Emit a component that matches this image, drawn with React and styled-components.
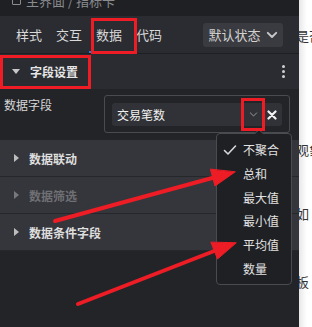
import React from "react";
import styled, { createGlobalStyle } from "styled-components";

const GlobalStyle = createGlobalStyle`
  html, body {
    margin: 0;
    padding: 0;
    background: #ffffff;
  }
  * {
    box-sizing: border-box;
  }
  #root {
    width: 312px;
    height: 327px;
    overflow: hidden;
    font-family: "Noto Sans CJK SC", "Noto Sans", sans-serif;
  }
`;

const tabs = ["样式", "交互", "数据", "代码"];
const rows = [
  { name: "数据联动", disabled: false },
  { name: "数据筛选", disabled: true },
  { name: "数据条件字段", disabled: false },
];
const aggregates = ["不聚合", "总和", "最大值", "最小值", "平均值", "数量"];

const ChevronDown = ({ size = 10, color = "#cfcfcf", stroke = 1.6 }) => (
  <svg width={size} height={size} viewBox="0 0 10 10">
    <path d="M1.5 3.2 L5 6.7 L8.5 3.2" fill="none" stroke={color} strokeWidth={stroke} strokeLinecap="round" strokeLinejoin="round" />
  </svg>
);

const App = () => {
  return (
    <Page>
      <GlobalStyle />
      <MainPanel>
        <TopBar>
          <Crumb>
            <CrumbIcon />
            主界面 / 指标卡
          </Crumb>
        </TopBar>

        <TabBar>
          <TabList>
            {tabs.map((t) => (
              <Tab key={t} active={t === "数据"}>{t}</Tab>
            ))}
          </TabList>
          <StateSelect>
            默认状态
            <ChevronDown size={12} color="#c8c8c8" />
          </StateSelect>
        </TabBar>

        <SectionHeader>
          <Caret open />
          <SectionTitle>字段设置</SectionTitle>
          <Kebab>
            <i /><i /><i />
          </Kebab>
        </SectionHeader>

        <FieldArea>
          <FieldLabel>数据字段</FieldLabel>
          <SelectorBox>
            <SelectInput>
              <SelectValue>交易笔数</SelectValue>
              <SelectArrow>
                <ChevronDown size={9} color="#9a9a9a" stroke={1.1} />
              </SelectArrow>
              <ClearButton>
                <svg width="10" height="10" viewBox="0 0 10 10">
                  <path d="M1.5 1.5 L8.5 8.5 M8.5 1.5 L1.5 8.5" stroke="#f2f2f2" strokeWidth="2.2" strokeLinecap="round" />
                </svg>
              </ClearButton>
            </SelectInput>
          </SelectorBox>
        </FieldArea>

        {rows.map((r) => (
          <CollapseRow key={r.name}>
            <Caret disabled={r.disabled} />
            <RowTitle disabled={r.disabled}>{r.name}</RowTitle>
          </CollapseRow>
        ))}

        <Menu>
          <MenuNotch />
          {aggregates.map((a, i) => (
            <MenuItem key={a}>
              <Check>
                {i === 0 && (
                  <svg width="14" height="12" viewBox="0 0 14 12">
                    <path d="M1.5 6.5 L5 10 L12.5 2" fill="none" stroke="#d8d8d8" strokeWidth="1.6" strokeLinecap="round" strokeLinejoin="round" />
                  </svg>
                )}
              </Check>
              {a}
            </MenuItem>
          ))}
        </Menu>
      </MainPanel>

      <SidePanel>
        <SideText top={29}>是否</SideText>
        <SideText top={100}>观象</SideText>
        <SideText top={50}>如</SideText>
        <SideText top={54}>板</SideText>
      </SidePanel>

      <Annotations width="312" height="327" viewBox="0 0 312 327">
        <g fill="none" stroke="#ee1c25" strokeWidth="3">
          <rect x="92.5" y="19.5" width="43" height="33" />
          <rect x="1.5" y="56.5" width="88" height="31" />
          <rect x="242.5" y="99.5" width="21" height="30" />
        </g>
        <g fill="#ee1c25" stroke="#ee1c25" strokeLinecap="round">
          <line x1="55" y1="221" x2="214" y2="177.5" strokeWidth="4" />
          <polygon points="235,172 215,186 210.5,169.5" strokeWidth="1" strokeLinejoin="round" />
          <line x1="78" y1="304" x2="215.5" y2="250.5" strokeWidth="4" />
          <polygon points="236,243 217.5,259 211,242.5" strokeWidth="1" strokeLinejoin="round" />
        </g>
      </Annotations>
    </Page>
  );
};

const Page = styled.div`
  position: relative;
  display: flex;
  width: 312px;
  height: 327px;
  background: #ffffff;
`;

const MainPanel = styled.div`
  position: relative;
  width: 299px;
  height: 100%;
  display: flex;
  flex-direction: column;
  background: #232428;
`;

const TopBar = styled.div`
  height: 16px;
  background: #1f2024;
  overflow: hidden;
  padding-left: 12px;
`;

const Crumb = styled.div`
  display: flex;
  align-items: center;
  gap: 5px;
  margin-top: -8px;
  height: 16px;
  font-size: 13px;
  color: #8a8b8f;
`;

const CrumbIcon = styled.span`
  width: 9px;
  height: 9px;
  border: 1px solid #8a8b8f;
  border-radius: 1px;
`;

const TabBar = styled.div`
  height: 38px;
  display: flex;
  align-items: center;
  justify-content: space-between;
  padding: 0 16px 0 9px;
  background: #2b2c31;
  border-bottom: 1px solid #1e1f22;
`;

const TabList = styled.div`
  display: flex;
  height: 100%;
`;

const Tab = styled.div`
  width: 40px;
  height: 100%;
  display: flex;
  align-items: center;
  justify-content: center;
  font-size: 13px;
  color: #d9d9d9;
  border-bottom: 2px solid ${(p) => (p.active ? "#1a7ff0" : "transparent")};
  padding-top: 2px;
`;

const StateSelect = styled.div`
  width: 80px;
  height: 24px;
  display: flex;
  align-items: center;
  justify-content: center;
  gap: 5px;
  background: #3a3b40;
  border-radius: 3px;
  font-size: 13px;
  color: #d2d2d2;
`;

const SectionHeader = styled.div`
  height: 35px;
  display: flex;
  align-items: center;
  padding: 0 14px 0 12px;
  background: #2b2c31;
`;

const Caret = styled.span`
  width: 0;
  height: 0;
  margin-right: 10px;
  margin-left: ${(p) => (p.open ? "0" : "2px")};
  ${(p) =>
    p.open
      ? `border-left: 4px solid transparent; border-right: 4px solid transparent; border-top: 5px solid #c8c8c8;`
      : `border-top: 4px solid transparent; border-bottom: 4px solid transparent; border-left: 5px solid ${p.disabled ? "#77787c" : "#bdbdbd"};`}
`;

const SectionTitle = styled.div`
  flex: 1;
  font-size: 12px;
  font-weight: 700;
  color: #e6e6e6;
`;

const Kebab = styled.div`
  display: flex;
  flex-direction: column;
  gap: 2px;
  & > i {
    width: 3px;
    height: 3px;
    border-radius: 50%;
    background: #d0d0d0;
  }
`;

const FieldArea = styled.div`
  height: 51px;
  display: flex;
  align-items: flex-start;
  padding: 6px 9px 0 4px;
  background: #232428;
`;

const FieldLabel = styled.div`
  width: 100px;
  font-size: 12px;
  color: #d6d6d6;
  line-height: 18px;
  margin-top: 1px;
`;

const SelectorBox = styled.div`
  width: 186px;
  height: 38px;
  padding: 7px 7px;
  border: 1px solid #4a4b50;
  border-radius: 3px;
`;

const SelectInput = styled.div`
  height: 23px;
  display: flex;
  align-items: center;
  padding: 0 5px;
  background: #313237;
  border-radius: 3px;
`;

const SelectValue = styled.div`
  flex: 1;
  font-size: 12px;
  color: #f0f0f0;
`;

const SelectArrow = styled.span`
  display: flex;
  width: 12px;
  margin-right: 8px;
  justify-content: center;
`;

const ClearButton = styled.span`
  display: flex;
  align-items: center;
`;

const CollapseRow = styled.div`
  height: 37px;
  display: flex;
  align-items: center;
  padding-left: 12px;
  background: #35363b;
  border-bottom: 1px solid #26272b;
  &:last-of-type {
    border-bottom: none;
  }
`;

const RowTitle = styled.div`
  font-size: 12px;
  font-weight: 700;
  color: ${(p) => (p.disabled ? "#6f7074" : "#dedede")};
`;

const Menu = styled.div`
  position: absolute;
  left: 216px;
  top: 133px;
  width: 76px;
  height: 152px;
  padding: 4px 0;
  display: flex;
  flex-direction: column;
  background: #1f2024;
  border: 1px solid #4a4b50;
  border-radius: 4px;
`;

const MenuNotch = styled.span`
  position: absolute;
  top: -4px;
  left: 39px;
  width: 6px;
  height: 6px;
  background: #1f2024;
  border-left: 1px solid #4a4b50;
  border-top: 1px solid #4a4b50;
  transform: rotate(45deg);
`;

const MenuItem = styled.div`
  height: 23.7px;
  display: flex;
  align-items: center;
  font-size: 12px;
  color: #e2e2e2;
`;

const Check = styled.span`
  width: 26px;
  display: flex;
  justify-content: center;
`;

const SidePanel = styled.div`
  flex: 1;
  height: 100%;
  overflow: hidden;
  display: flex;
  flex-direction: column;
  background: linear-gradient(90deg, #e6e6e8 0px, #f4f4f5 4px, #ffffff 8px);
`;

const SideText = styled.div`
  margin-top: ${(p) => p.top}px;
  margin-left: -3px;
  height: 14px;
  line-height: 14px;
  font-size: 13px;
  color: #333333;
  white-space: nowrap;
`;

const Annotations = styled.svg`
  position: absolute;
  left: 0;
  top: 0;
  pointer-events: none;
`;

export default App;
